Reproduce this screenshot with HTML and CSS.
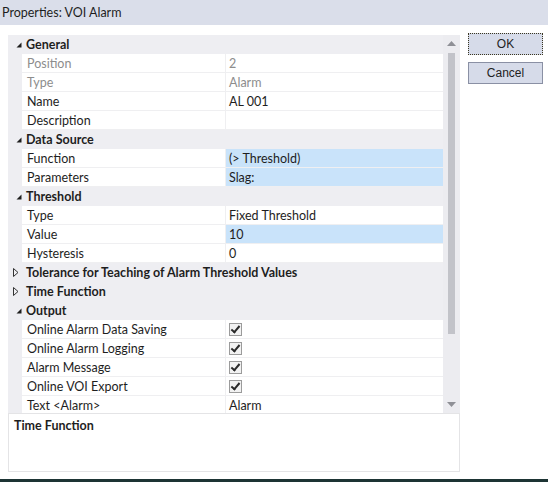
FILE: index.html
```html
<!DOCTYPE html>
<html>
<head>
<meta charset="utf-8">
<title>Properties: VOI Alarm</title>
<link rel="stylesheet" href="styles.css">
</head>
<body>
<div class="titlebar">Properties: VOI Alarm</div>
<div class="main">
	<div class="left">
		<div class="grid">
			<div class="rows">
				<div class="cat"><span class="tw"><svg width="6" height="6" viewBox="0 0 6 6"><polygon points="5.5,0.5 5.5,5.5 0.5,5.5" fill="#1e1e1e"/></svg></span>General</div>
				<div class="prop dis"><span class="name">Position</span><span class="val">2</span></div>
				<div class="prop dis"><span class="name">Type</span><span class="val">Alarm</span></div>
				<div class="prop"><span class="name">Name</span><span class="val">AL 001</span></div>
				<div class="prop"><span class="name">Description</span><span class="val"></span></div>
				<div class="cat"><span class="tw"><svg width="6" height="6" viewBox="0 0 6 6"><polygon points="5.5,0.5 5.5,5.5 0.5,5.5" fill="#1e1e1e"/></svg></span>Data Source</div>
				<div class="prop"><span class="name">Function</span><span class="val hl">(&gt; Threshold)</span></div>
				<div class="prop"><span class="name">Parameters</span><span class="val hl">Slag:</span></div>
				<div class="cat"><span class="tw"><svg width="6" height="6" viewBox="0 0 6 6"><polygon points="5.5,0.5 5.5,5.5 0.5,5.5" fill="#1e1e1e"/></svg></span>Threshold</div>
				<div class="prop"><span class="name">Type</span><span class="val">Fixed Threshold</span></div>
				<div class="prop"><span class="name">Value</span><span class="val hl">10</span></div>
				<div class="prop"><span class="name">Hysteresis</span><span class="val">0</span></div>
				<div class="cat"><span class="tw tw-c"><svg width="6" height="9" viewBox="0 0 6 9"><polygon points="0.5,0.5 5,4.5 0.5,8.5" fill="none" stroke="#333" stroke-width="1"/></svg></span>Tolerance for Teaching of Alarm Threshold Values</div>
				<div class="cat"><span class="tw tw-c"><svg width="6" height="9" viewBox="0 0 6 9"><polygon points="0.5,0.5 5,4.5 0.5,8.5" fill="none" stroke="#333" stroke-width="1"/></svg></span>Time Function</div>
				<div class="cat"><span class="tw"><svg width="6" height="6" viewBox="0 0 6 6"><polygon points="5.5,0.5 5.5,5.5 0.5,5.5" fill="#1e1e1e"/></svg></span>Output</div>
				<div class="prop"><span class="name">Online Alarm Data Saving</span><span class="val"><span class="chk"></span></span></div>
				<div class="prop"><span class="name">Online Alarm Logging</span><span class="val"><span class="chk"></span></span></div>
				<div class="prop"><span class="name">Alarm Message</span><span class="val"><span class="chk"></span></span></div>
				<div class="prop"><span class="name">Online VOI Export</span><span class="val"><span class="chk"></span></span></div>
				<div class="prop"><span class="name">Text &lt;Alarm&gt;</span><span class="val">Alarm</span></div>
			</div>
			<div class="vscroll">
				<div class="arrow"><svg width="9" height="5" viewBox="0 0 9 5"><polygon points="4.5,0 9,5 0,5" fill="#8f9096"/></svg></div>
				<div class="track"><div class="thumb"></div></div>
				<div class="arrow"><svg width="9" height="5" viewBox="0 0 9 5"><polygon points="0,0 9,0 4.5,5" fill="#8f9096"/></svg></div>
			</div>
		</div>
		<div class="desc"><b>Time Function</b></div>
	</div>
	<div class="buttons">
		<div class="btn focus">OK</div>
		<div class="btn">Cancel</div>
	</div>
</div>
<div class="bottomline"></div>
</body>
</html>
```

FILE: styles.css
```css
* {padding:0;margin:0;box-sizing:border-box;}
body {width:548px;height:482px;display:flex;flex-direction:column;background:#fff;font-family:Lato,"Noto Sans",sans-serif;font-size:12.5px;color:#1e1e1e;overflow:hidden;}
.titlebar {height:25px;line-height:25px;padding-left:2px;background:#dadeea;color:#1e1e1e;}
.main {flex:1;display:flex;gap:8px;padding:8px 0 0 8px;}
.left {width:452px;display:flex;flex-direction:column;}
/*属性表格*/
.grid {margin-top:2px;height:378px;display:flex;background:#eeeef2;overflow:hidden;}
.rows {width:435px;}
.cat {height:19px;line-height:19px;font-weight:bold;display:flex;align-items:center;}
.tw {width:18px;height:19px;display:flex;align-items:center;justify-content:flex-start;padding-left:8px;}
.tw-c {padding-left:5px;}
.prop {height:19px;margin-left:14px;display:flex;background:#fff;border-bottom:1px solid #efeff1;}
.prop .name {width:204px;padding-left:5px;line-height:19px;border-right:1px solid #efeff1;white-space:nowrap;}
.prop .val {flex:1;padding-left:3px;line-height:19px;display:flex;align-items:center;}
.dis {color:#8d8d8d;}
.hl {background:#c9e3fa;}
.chk {width:13px;height:13px;border:1px solid #9b9b9b;background:#f2f2f2;position:relative;}
.chk:after {content:"";position:absolute;left:3px;top:0px;width:3px;height:7px;border:solid #2a2a2a;border-width:0 2px 2px 0;transform:rotate(40deg);}
/*滚动条*/
.vscroll {width:17px;display:flex;flex-direction:column;background:#ececf0;}
.arrow {height:17px;display:flex;align-items:center;justify-content:center;}
.track {flex:1;padding:1px 5px 0 5px;}
.thumb {width:7px;height:281px;background:#c2c3c9;}
/*说明区*/
.desc {height:59px;border:1px solid #e4e4e6;background:#fff;padding:4px 5px;line-height:16px;}
.buttons {width:75px;display:flex;flex-direction:column;gap:7px;}
.btn {height:22px;line-height:20px;text-align:center;background:#d6dbe9;border:1px solid #8a90a4;font-family:"Liberation Sans",sans-serif;font-size:12px;color:#222;}
.focus {border:1px dotted #3a3620;}
.bottomline {height:3px;background:#1d3434;margin-top:auto;}
```
